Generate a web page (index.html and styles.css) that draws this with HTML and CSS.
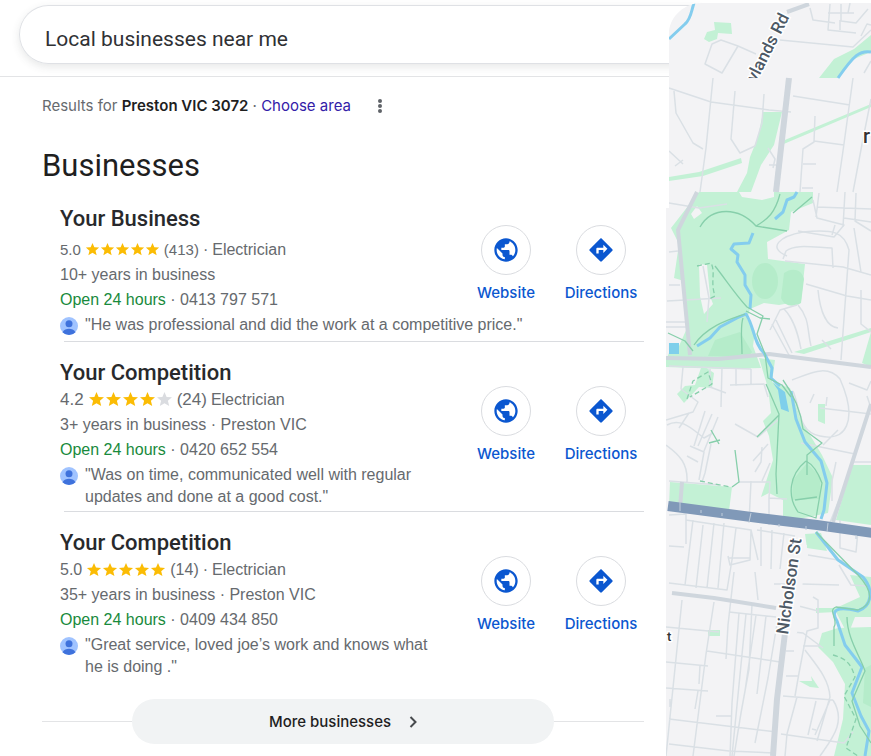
FILE: index.html
```html
<!DOCTYPE html>
<html lang="en">
<head>
  <meta charset="UTF-8">
  <meta name="viewport" content="width=device-width, initial-scale=1.0">
  <title>Local businesses near me</title>
  <link rel="stylesheet" href="styles.css">
</head>
<body>
  <!-- Shared icons -->
  <svg class="sprite" aria-hidden="true">
    <symbol id="icon-globe" viewBox="0 0 24 24">
      <path d="M12 2C6.48 2 2 6.48 2 12s4.48 10 10 10 10-4.48 10-10S17.52 2 12 2zm-1 17.93c-3.95-.49-7-3.85-7-7.93 0-.62.08-1.21.21-1.79L9 15v1c0 1.1.9 2 2 2v1.93zm6.9-2.54c-.26-.81-1-1.39-1.9-1.39h-1v-3c0-.55-.45-1-1-1H8v-2h2c.55 0 1-.45 1-1V7h2c1.1 0 2-.9 2-2v-.41c2.93 1.19 5 4.06 5 7.41 0 2.08-.8 3.97-2.1 5.39z"/>
    </symbol>
    <symbol id="icon-directions" viewBox="0 0 24 24">
      <path d="M21.71 11.29l-9-9c-.39-.39-1.02-.39-1.41 0l-9 9c-.39.39-.39 1.02 0 1.41l9 9c.39.39 1.02.39 1.41 0l9-9c.39-.38.39-1.01 0-1.41zM14 14.5V12h-4v3H8v-4c0-.55.45-1 1-1h5V7.5l3.5 3.5-3.5 3.5z"/>
    </symbol>
    <symbol id="icon-star" viewBox="0 0 17 17">
      <path d="M8.500 1L10.600 5.900 16 6.300 11.900 9.800 13.200 15 8.500 12.200 3.800 15 5.100 9.800 1 6.300 6.400 5.900z"/>
    </symbol>
    <symbol id="icon-avatar" viewBox="0 0 18 18">
      <circle cx="9" cy="9" r="9" fill="#a0c3ff"/>
      <circle cx="9" cy="6.800" r="3.500" fill="#3f72dc"/>
      <path d="M2.500 15.200C4 12.500 6.500 11.700 9 11.700s5 .8 6.500 3.500A9 9 0 0 1 9 18a9 9 0 0 1-6.500-2.800z" fill="#3f72dc"/>
    </symbol>
  </svg>

  <div class="page">
    <main class="panel">
      <header class="header">
        <form class="search" role="search">
          <input type="text" class="search-input" aria-label="Search" value="Local businesses near me">
        </form>
      </header>

      <div class="results">
        <div class="location">
          <span>Results for <strong>Preston VIC 3072</strong> · <a href="#">Choose area</a></span>
          <button type="button" class="menu-button" aria-label="More options">
            <svg viewBox="0 0 6 16" width="6" height="16"><circle cx="3" cy="3" r="2"/><circle cx="3" cy="8" r="2"/><circle cx="3" cy="13" r="2"/></svg>
          </button>
        </div>

        <h1>Businesses</h1>

        <article class="business business-featured">
          <div class="info">
            <h2>Your Business</h2>
            <div class="row rating rating-small">
              <span class="score">5.0</span>
              <svg class="stars" viewBox="0 0 85 17" role="img" aria-label="5 out of 5 stars">
                <use href="#icon-star" width="17" height="17"/>
                <use href="#icon-star" x="17" width="17" height="17"/>
                <use href="#icon-star" x="34" width="17" height="17"/>
                <use href="#icon-star" x="51" width="17" height="17"/>
                <use href="#icon-star" x="68" width="17" height="17"/>
              </svg>
              <span class="score">(413)</span>
              <span>·</span>
              <span>Electrician</span>
            </div>
            <div class="row">10+ years in business</div>
            <div class="row"><span class="open">Open 24 hours</span> · 0413 797 571</div>
          </div>
          <div class="actions">
            <a href="#" class="action"><span class="circle"><svg><use href="#icon-globe"/></svg></span>Website</a>
            <a href="#" class="action"><span class="circle"><svg><use href="#icon-directions"/></svg></span>Directions</a>
          </div>
          <div class="quote">
            <svg class="avatar"><use href="#icon-avatar"/></svg>
            <p>"He was professional and did the work at a competitive price."</p>
          </div>
        </article>

        <hr class="divider">

        <article class="business">
          <div class="info">
            <h2>Your Competition</h2>
            <div class="row rating rating-large">
              <span class="score">4.2</span>
              <svg class="stars" viewBox="0 0 85 17" role="img" aria-label="4 out of 5 stars">
                <use href="#icon-star" width="17" height="17"/>
                <use href="#icon-star" x="17" width="17" height="17"/>
                <use href="#icon-star" x="34" width="17" height="17"/>
                <use href="#icon-star" x="51" width="17" height="17"/>
                <use href="#icon-star" class="star-empty" x="68" width="17" height="17"/>
              </svg>
              <span class="score">(24)</span>
              <span>Electrician</span>
            </div>
            <div class="row">3+ years in business · Preston VIC</div>
            <div class="row"><span class="open">Open 24 hours</span> · 0420 652 554</div>
          </div>
          <div class="actions">
            <a href="#" class="action"><span class="circle"><svg><use href="#icon-globe"/></svg></span>Website</a>
            <a href="#" class="action"><span class="circle"><svg><use href="#icon-directions"/></svg></span>Directions</a>
          </div>
          <div class="quote">
            <svg class="avatar"><use href="#icon-avatar"/></svg>
            <p>"Was on time, communicated well with regular updates and done at a good cost."</p>
          </div>
        </article>

        <hr class="divider">

        <article class="business">
          <div class="info">
            <h2>Your Competition</h2>
            <div class="row rating">
              <span class="score">5.0</span>
              <svg class="stars" viewBox="0 0 85 17" role="img" aria-label="5 out of 5 stars">
                <use href="#icon-star" width="17" height="17"/>
                <use href="#icon-star" x="17" width="17" height="17"/>
                <use href="#icon-star" x="34" width="17" height="17"/>
                <use href="#icon-star" x="51" width="17" height="17"/>
                <use href="#icon-star" x="68" width="17" height="17"/>
              </svg>
              <span class="score">(14)</span>
              <span>·</span>
              <span>Electrician</span>
            </div>
            <div class="row">35+ years in business · Preston VIC</div>
            <div class="row"><span class="open">Open 24 hours</span> · 0409 434 850</div>
          </div>
          <div class="actions">
            <a href="#" class="action"><span class="circle"><svg><use href="#icon-globe"/></svg></span>Website</a>
            <a href="#" class="action"><span class="circle"><svg><use href="#icon-directions"/></svg></span>Directions</a>
          </div>
          <div class="quote">
            <svg class="avatar"><use href="#icon-avatar"/></svg>
            <p>"Great service, loved joe’s work and knows what he is doing ."</p>
          </div>
        </article>

        <div class="more">
          <button type="button" class="more-button">
            More businesses
            <svg viewBox="0 0 8 12" width="8" height="12"><path d="M1.500 1l5 5-5 5"/></svg>
          </button>
        </div>
      </div>
    </main>

    <aside class="map">
      <svg viewBox="666 0 205 756" role="img" aria-label="Map of Preston">
        <defs>
          <clipPath id="map-edge">
            <path d="M669 31C671 16 684 3 702 3H871V756H666V208H669z"/>
          </clipPath>
          <clipPath id="tile-top"><path d="M666 0H871V78H666z"/></clipPath>
        </defs>
        <g clip-path="url(#map-edge)">
          <path class="land" d="M666 0H871V756H666z"/>

          <!-- Parks -->
          <g class="park">
            <path d="M714 22l17 1 1 11-14-1-1 6-8 3-5-3 3-7 8-2z"/>
            <path d="M819 78l15-19 20-10 17-14v17l-17 7-17 19z"/>
            <path d="M763 112h19l-8 33-13 20-10 27h-14l10-19 3-16 8-20z"/>
            <path d="M780 142l91-38v3l-92 39zM669 177l30-5 42-14 1 5-39 13-34 5z"/>
            <path d="M699 192h40l3 5 20 3 12-3v-5h39v11l-22 9-2 18-22 12 1 17 37 5-4 37-22 4-15-2-14 6-3 10 8 12-2 15 8 22-36 1-62-2 6-14 10-7 9-20-4-45-10-3 5-34-8-16z"/>
            <path d="M759 358l16 2-3 22 18 6 11 32 21 35 11 23-5 35-29 6-16-2v-17l-14-7-8 4 12-37-4-24-6-15 8-8-3-25z"/>
            <path d="M670 482l62 5-3 24-60-5zM852 465h19v60l-35-5z"/>
            <path d="M702 365l12 8-2 15-13-1-15 16-7-9 8-8 10-1zM818 404h7v20l-7-3z"/>
            <path d="M805 534l16-1 6 18-20-3zM850 575l21 2v40h-16l-7 18-12-23-20 1v-5h20l24-11z"/>
            <path d="M838 628l33-1v129h-37l9-37 2-35-12-22-15-15 4-14zM708 630h12v6h-12zM799 681h13l-1-5 8 12-9-1z"/>
            <path d="M794 352l77-24v4l-67 22zM862 363l9-31v35z"/>
          </g>
          <g class="park-dark">
            <ellipse cx="765" cy="281" rx="13" ry="18"/>
            <path d="M784 273c8-6 18-4 20 6l-3 24c-8 5-17 3-20-5zM715 340l25-8 12 20-4 5-40-1z"/>
            <path d="M865 668l6-3v42l-8-4zM793 480l14-17 14 15-2 21-27 1z"/>
          </g>
          <path class="land" d="M699 264l8 1 3 31 3 8-9 10-4-18zM697 206l5 7-8 6-3-5z"/>
          <path class="water-fill" d="M669 343h10v11h-10zM773 383l12 9 4 20-8-3-3-19z"/>

          <!-- Minor streets -->
          <g class="street" clip-path="url(#tile-top)">
            <path d="M712 44l-7 20 17 9 16-27-17-6zM738 46l18 8M780 40l73 7 18-17M810 8l3 12 22 3M830 4l-2 26 28 3M841 4v17l15 2 12-14M828 13h26M840 20v10M861 36l6-12 4 1M850 3l-2 10M871 61l-7 12"/>
          </g>
          <g class="street">
            <path d="M669 88l42 14 58 8 22 2M713 78l-7 70-6 44M674 91l2 22 17 30 10 6M735 91l-4 48 9 14 15-7 7-23 2-29M793 96l57 9M853 78l-10 73-6 41M871 99l-8 40-10 53M815 116l-1 26-11 7-3 43M814 141l30 4M803 164h13M802 188h11M768 148l7 11-2 9M769 165h7M669 151l14 13M683 160l-8 6"/>
            <path d="M669 203l30 5 28-4M669 252l9-1M669 285h11M667 301l54-3M666 322h22M666 327h22M703 266l6 32-2 24M813 200l4 18 27 7-10 12-36-6M817 207l54 2M819 193l-3 24M845 192l-2 35M856 193l-1 28 16 10M871 222l-27-4M835 225l-3 10"/>
            <path d="M787 256c-21-9-6-20 16-24 31-3 41 0 46 18l-8 110M783 259l3-8c9-7 25-4 46-3l1 20M785 261l58 6 28 8M806 284l41 12 24 4M818 290c2 20 8 37 20 38M798 305c12 14 9 25 13 41M784 309c10 10 14 25 17 40M861 290v34l10 8M861 272l-7-44M831 349l-9-9M772 324l18 33M776 320l16 33M770 330l10-20 17-5"/>
          </g>
          <g class="street">
            <path d="M669 366l82 3M683 367l-2 22 17 13-5 10-27 8M710 369v18l16 6M722 367l-1 40M736 368v18M751 369v16M730 385l34-1 4 13M735 424l23 13 20-17M667 425c14-8 25 4 37 13l9-5M689 413l-10 15M705 411l-11 35M712 414l-14 32M718 417l-14 34M711 444l-6 29-3 9M666 445c14 10 22 19 21 37M699 480l5-28-14-6M687 456l11 6M768 444l-15 17M762 447l-1 15-6 10M770 463l-8 18M739 482h31l-1 16 18 1M751 481l-2 42M769 498v27M669 481l50 4"/>
            <path d="M792 380c19-7 35-16 48-1 19 43 5 63-20 57-22-3-20-30-27-45M820 408l51 6M814 394l-4 9M827 397l-1 9M801 443l54 11M838 430l-15 15M853 462h18M839 500l-12 30M849 383l18 7 4-9M867 396l4 12M832 501v-20l4-19"/>
          </g>
          <g class="street">
            <path d="M669 515l17-1v30M669 546l15 1M693 520l-8 65M703 525l-7 63M714 523l-7 65M724 523l-6 65M686 520l65 10-1 30-20 5-2-9M736 528l-4 32M751 530l7 30M761 527v39M772 530l-1 39M784 533l-4 36M794 545l-2 25M757 530l38 6M728 558h22M669 583l58 7 5-30M734 572l-6 53-2 34M755 572l3 28M808 555l36 6 11 11M840 520v28l16 4 2-21M774 584h28l37 1M839 565l12 20 15 1M813 597l5 3v14"/>
            <path d="M682 600l-16 156M714 602l-8 52-13 102M666 627l53 5M729 612l47 5M752 604l-3 65-8 44-7 43M739 613l-7 90-2 54M746 614l-14 142M756 615l-11 76M766 616l-9 78M778 618l-10 60-13 65M666 662l42 4M700 665l-1 19M707 651l73 11M666 688l42 3M698 691l-3 18M669 719l108 13M669 744l60 7 46 2M716 716h16M670 699v8"/>
            <path d="M791 604l27 7v17l-11 3-8 42-4 23M783 631l20 2 20 15M803 646h18M805 650c12 16 24 29 25 47l-13 44M783 696l50 4M797 697l-10 37-2 22M816 701l-8 34M781 734l63 9 9-11M786 651h8M786 676h12M833 700c14 22-2 40-13 56M812 729l4 1M830 700l-15 35"/>
          </g>

          <!-- Main roads -->
          <path class="road" d="M789 78l-13 114"/>
          <path class="road road-thin" d="M697 192l-19 38 12 125"/>
          <path class="road road-thin" d="M666 358l52 1 51-5 102 13M871 404l-38 118M682 482l-2 26"/>
          <path class="road road-thin" d="M672 593l42 5 62 10"/>
          <path class="road" d="M785 633l-8 66-4 57"/>
          <path class="road road-thin" d="M787 12l22-8"/>
          <path class="highway" d="M668 506l91 12 58 7 56 8"/>
          <path class="highway-ticks" d="M701 510v3M722 513v3M751 513l-2 9M779 524v3M806 526v4M828 523l-1 9M680 502v9M856 535v4"/>

          <!-- Creeks and trails -->
          <path class="water" d="M694 3c-3 9-3 16-9 21l-16 15M871 52c-11-2-17 3-33 26"/>
          <path class="water" d="M797 192l-3 5-7 3-4 12-8 7M753 233l-4 10-15 1-3 5 7 6-1 7 8 13v10l6 10-1 14M697 346l13-8 10-11 17-9 9-4c8 12 8 30 18 39l8 15-1 10 9 8M791 391l5 28 9 23 16 19 6 22-3 27-3 9"/>
          <path class="water" d="M816 532l22 28 25 17c11 13 9 29-5 34-21-5-28-1-21 10l8 24 17 22-10 26 9 23 8 15-4 25"/>
          <path class="trail" d="M700 227c12-21 39-20 56-1l31 5M756 226c12-7 19-13 24-32M793 213l19-16M715 266c11 14 20 28 32 41l16 9-6 18 8 20 3 24 14 7 9 12M694 345c14-20 37-26 51-31M743 318c-3 9-1 20-1 36M766 384l13 30-3 60 1 20M757 437l22-22M783 380c11 15 18 32 20 49l19 14-15 12v20"/>
          <path class="trail" d="M806 461c-17 14-19 35-8 51l18 6 6-35c-3-8-8-18-16-22M795 500l22-3M735 450l4 32-7 5M816 532l42 43c16 17 15 30 0 35l-22-3c-9 3 3 13-2 20v19M847 617c0 21 13 39 18 54l-13 30 8 25 11 17M668 333l17 8 8 10M709 443l11-3M711 430l8 14M746 311l14 7 10 1"/>
          <path class="trail trail-dashed" d="M697 266l14-3c5 10-1 18 4 33l-6 3M833 655c15 4 18 10 22 22l-11 19 12 23-10 29 12 8M687 399l6-18 15-9 4 12-22 13M700 481l30 6"/>

          <path class="land" d="M780 633l10-90 17 2-10 88z"/>
          <g clip-path="url(#tile-top)">
            <text class="map-label" transform="translate(756 83) rotate(-63)">ylands Rd</text>
          </g>
          <text class="map-label" transform="translate(788 635) rotate(-82)">Nicholson St</text>
          <text class="map-label map-label-bold" x="863" y="143">r</text>
          <text class="map-label map-label-small" x="667" y="641">t</text>
        </g>
      </svg>
    </aside>
  </div>
</body>
</html>
```

FILE: styles.css
```css
* {
  box-sizing: border-box;
}

body {
  margin: 0;
  background-color: #fff;
  color: #666a6e;
  font-family: "Liberation Sans", Arial, sans-serif;
  font-size: 16px;
}

a {
  text-decoration: none;
}

button {
  border: none;
  font-family: inherit;
  cursor: pointer;
}

.sprite {
  display: none;
}

.page {
  display: grid;
  grid-template-columns: minmax(0, 1fr) 205px;
  min-height: 100vh;
}

/* Search */
.header {
  margin-right: -34px;
  padding: 5px 0 12px 19px;
  border-bottom: 1px solid #e3e4e6;
}

.search {
  height: 59px;
  border: 1px solid #dfe1e5;
  border-right: none;
  border-radius: 30px 0 0 30px;
  box-shadow: 0 3px 8px rgba(60, 64, 67, 0.12);
}

.search-input {
  width: 100%;
  height: 100%;
  padding: 8px 25px 0;
  border: none;
  outline: none;
  background: none;
  color: #303134;
  font-family: Roboto, sans-serif;
  font-size: 21px;
}

/* Results */
.results {
  padding: 17px 22px 12px 42px;
}

.location {
  display: flex;
  align-items: center;
  gap: 22px;
  font-family: Inter, sans-serif;
  font-size: 15px;
  line-height: 24px;
}

.location strong {
  color: #1f1f1f;
  font-weight: 600;
}

.location a {
  color: #3320a8;
}

.menu-button {
  display: flex;
  padding: 4px;
  background: none;
  fill: #5f6368;
}

h1 {
  margin: 28px 0 19px;
  color: #1f1f1f;
  font-family: Roboto, sans-serif;
  font-size: 31px;
  font-weight: 400;
  line-height: 40px;
}

h2 {
  margin: 0;
  color: #28292c;
  font-family: Roboto, sans-serif;
  font-size: 22px;
  font-weight: 500;
  line-height: 28px;
}

.business {
  display: grid;
  grid-template-columns: minmax(0, 1fr) auto;
  padding: 17px 0 3px 18px;
}

.business-featured {
  padding-top: 0;
  padding-bottom: 5px;
}

.business-featured h2 {
  margin-bottom: 4px;
}

.info {
  padding-bottom: 2px;
}

.row {
  line-height: 25px;
}

.rating {
  display: flex;
  align-items: center;
  gap: 4px;
}

.stars {
  width: 80px;
  height: 16px;
  fill: #fbbc04;
}

.rating-small .score {
  font-size: 15px;
}

.rating-small .stars {
  width: 75px;
  height: 15px;
}

.rating-large .score {
  font-size: 17px;
}

.rating-large .stars {
  width: 85px;
  height: 17px;
}

.star-empty {
  fill: #dadce0;
}

.open {
  color: #188a3c;
}

.actions {
  display: grid;
  grid-template-columns: 86px 86px;
  gap: 9px;
  align-self: start;
  padding-top: 27px;
}

.business-featured .actions {
  padding-top: 20px;
}

.action {
  display: flex;
  flex-direction: column;
  align-items: center;
  gap: 9px;
  color: #0b57d0;
  font-family: Inter, sans-serif;
  font-size: 15px;
  font-weight: 500;
  line-height: 18px;
}

.circle {
  display: flex;
  align-items: center;
  justify-content: center;
  width: 50px;
  height: 50px;
  border: 1px solid #dadce0;
  border-radius: 50%;
}

.circle svg {
  width: 28px;
  height: 28px;
  fill: #0b57d0;
}

.quote {
  display: flex;
  grid-column: 1 / -1;
  gap: 7px;
  line-height: 22px;
}

.quote p {
  max-width: 350px;
  margin: 0;
}

.business-featured .quote p {
  max-width: none;
}

.avatar {
  flex: none;
  width: 18px;
  height: 18px;
  margin-top: 3px;
}

.divider {
  height: 1px;
  margin: 0 0 0 22px;
  border: none;
  background-color: #dadce0;
}

.more {
  display: flex;
  align-items: center;
  margin-top: 18px;
}

.more::before,
.more::after {
  content: "";
  flex: 1;
  height: 1px;
  background-color: #e3e4e6;
}

.more-button {
  display: flex;
  flex: 0 0 70%;
  align-items: center;
  justify-content: center;
  gap: 18px;
  height: 45px;
  border-radius: 23px;
  background-color: #f1f3f4;
  color: #1f1f1f;
  font-family: Inter, sans-serif;
  font-size: 15px;
  font-weight: 500;
}

.more-button svg {
  fill: none;
  stroke: #474a4d;
  stroke-width: 2;
}

/* Map */
.map {
  position: relative;
  overflow: hidden;
}

.map svg {
  display: block;
  width: 100%;
}

.land {
  fill: #f3f3f5;
}

.park {
  fill: #c3f1d5;
}

.park-dark {
  fill: #b5ecca;
}

.water-fill {
  fill: #7fcfeb;
}

.street,
.road,
.highway,
.highway-ticks,
.water,
.trail {
  fill: none;
  stroke-linejoin: round;
}

.street {
  stroke: #dae0e5;
  stroke-width: 1.5;
}

.road {
  stroke: #cfd6dd;
  stroke-width: 6;
}

.road-thin {
  stroke-width: 4;
}

.highway {
  stroke: #8099b8;
  stroke-width: 10;
}

.highway-ticks {
  stroke: #c0cddb;
  stroke-width: 1;
}

.water {
  stroke: #84cdee;
  stroke-width: 3;
}

.trail {
  stroke: #87cfab;
  stroke-width: 1.3;
}

.trail-dashed {
  stroke-dasharray: 5 3;
}

.map-label {
  fill: #4d5965;
  stroke: #fff;
  stroke-width: 3;
  paint-order: stroke;
  font-family: Roboto, sans-serif;
  font-size: 17px;
  font-weight: 500;
}

.map-label-bold {
  fill: #333;
  font-size: 20px;
}

.map-label-small {
  fill: #333;
  font-size: 13px;
}
```
